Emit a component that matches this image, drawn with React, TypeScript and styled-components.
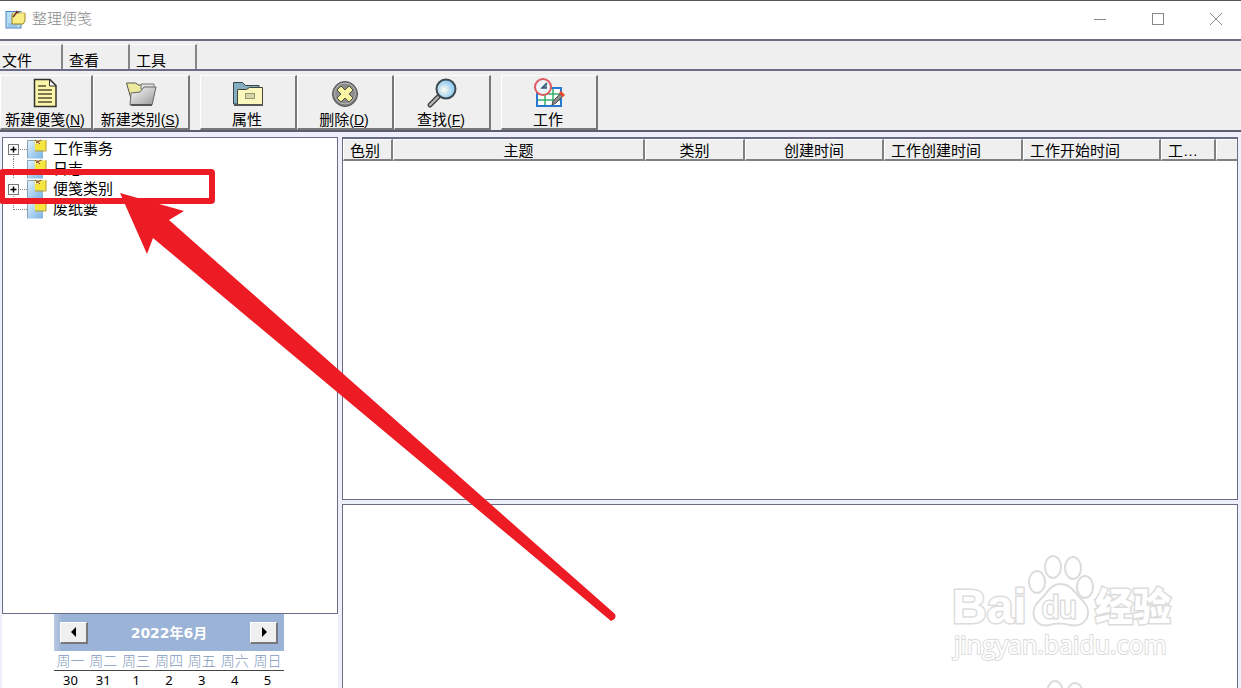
import React from "react";
import styled, { createGlobalStyle } from "styled-components";

const line = "#6c6c88";
const face = "#efefef";
const lavender = "#edf0fb";

const GlobalStyle = createGlobalStyle`
  * { box-sizing: border-box; }
  body {
    margin: 0;
    background: #fff;
    color: #000;
    font-family: "Liberation Sans", "Noto Sans CJK SC", sans-serif;
    font-size: 15px;
    overflow: hidden;
  }
  button { font: inherit; color: inherit; margin: 0; }
`;

const Window = styled.div`
  position: relative;
  display: flex;
  flex-direction: column;
  height: 100vh;
  border-top: 1px solid #58585a;
  overflow: hidden;
`;

const TitleBar = styled.header`
  display: flex;
  align-items: center;
  height: 38px;
  flex: none;
  padding: 0 0 2px 5px;
  gap: 6px;
`;

const Title = styled.h1`
  flex: 1;
  margin: 0;
  font-size: 15px;
  font-weight: 300;
  line-height: 20px;
  color: #8c8c8c;
`;

const WindowControls = styled.div`
  display: flex;
  gap: 8px;
`;

const WindowButton = styled.button`
  display: grid;
  place-items: center;
  width: 50px;
  height: 36px;
  padding: 0;
  border: 0;
  background: none;
`;

const MenuBar = styled.nav`
  display: flex;
  align-items: flex-end;
  flex: none;
  height: 32px;
  border-top: 2px solid ${line};
  border-bottom: 2px solid ${line};
  background: ${face};
`;

const MenuButton = styled.button<{ $width: number }>`
  width: ${(p) => p.$width}px;
  height: 25px;
  padding: 6px 0 0 2px;
  border: 0;
  border-top: 1px solid #fff;
  border-right: 2px solid #85858a;
  background: ${face};
  line-height: 20px;
  text-align: left;
  & + & { padding-left: 6px; }
`;

const Toolbar = styled.div`
  display: flex;
  flex: none;
  gap: 10px;
  padding-top: 4px;
  height: 61px;
  border-bottom: 2px solid #5d5d70;
  background: ${face};
`;

const ToolGroup = styled.div`
  display: flex;
`;

const ToolButton = styled.button<{ $width?: number }>`
  display: flex;
  flex-direction: column;
  align-items: center;
  width: ${(p) => p.$width ?? 97}px;
  height: 55px;
  padding: 2px 2px 0 0;
  border: solid;
  border-width: 1px 2px 2px 1px;
  border-color: #fff #77777c #77777c #fff;
  background: ${face};
  line-height: 20px;
  white-space: nowrap;
  svg { flex: none; margin-left: 2px; }
`;

const Mnemonic = styled.span`
  font-size: 14px;
`;

const Workspace = styled.main`
  display: grid;
  grid-template-columns: 336px minmax(0, 1fr);
  gap: 4px;
  flex: 1;
  min-height: 0;
  padding: 5px 3px 0 2px;
  background: ${lavender};
`;

const Sidebar = styled.aside`
  display: flex;
  flex-direction: column;
  min-height: 0;
  background: #fff;
`;

const TreePane = styled.section`
  flex: 1;
  border: 1px solid ${line};
  background: #fff;
  padding-left: 5px;
`;

const TreeList = styled.ul`
  margin: 0;
  padding: 1px 0 0;
  list-style: none;
`;

const TreeRow = styled.li`
  display: flex;
  align-items: center;
  height: 20px;
  line-height: 20px;
  svg { flex: none; }
`;

const TreeLabel = styled.span`
  margin-left: 6px;
`;

const Calendar = styled.section`
  flex: none;
  width: 230px;
  height: 74px;
  margin-left: 52px;
  overflow: hidden;
`;

const CalendarHeader = styled.div`
  display: flex;
  align-items: center;
  justify-content: space-between;
  height: 37px;
  padding: 0 6px;
  background: linear-gradient(to right, #b9cbe4, #9bb3d6 8px);
`;

const MonthLabel = styled.h2`
  margin: 0;
  color: #fff;
  font-family: "DejaVu Sans", "Noto Sans CJK SC", sans-serif;
  font-size: 14px;
  font-weight: 700;
  line-height: 20px;
`;

const StepButton = styled.button`
  display: grid;
  place-items: center;
  width: 28px;
  height: 22px;
  padding: 0;
  border: solid;
  border-width: 1px 2px 2px 1px;
  border-color: #fff #77777c #77777c #fff;
  background: ${face};
`;

const DayTable = styled.table`
  width: 100%;
  table-layout: fixed;
  border-collapse: collapse;
  text-align: center;
  th, td { padding: 0; }
  th {
    height: 19px;
    padding-top: 1px;
    border-bottom: 1px solid #444;
    color: #7d97ba;
    font-size: 14px;
    font-weight: 300;
    line-height: 18px;
  }
  td {
    height: 18px;
    font-family: "Noto Sans", sans-serif;
    font-size: 13px;
    line-height: 18px;
  }
`;

const Details = styled.div`
  display: grid;
  grid-template-rows: 364fr 184fr;
  gap: 4px;
  min-height: 0;
`;

const ListPane = styled.section`
  min-height: 0;
  border: 1px solid ${line};
  border-top-width: 2px;
  background: #fff;
`;

const PreviewPane = styled.section`
  min-height: 0;
  border: 1px solid ${line};
  border-bottom: 0;
  background: #fff;
`;

const NoteTable = styled.table`
  width: 100%;
  table-layout: fixed;
  border-collapse: separate;
  border-spacing: 0;
`;

const ColumnHead = styled.th<{ $left?: boolean }>`
  height: 22px;
  padding: 2px 6px 0;
  border: solid;
  border-width: 1px 2px 2px 1px;
  border-color: #fff #808084 #808084 #fff;
  background: ${face};
  font-weight: 400;
  line-height: 17px;
  text-align: ${(p) => (p.$left ? "left" : "center")};
  white-space: nowrap;
  overflow: hidden;
  &:last-child { border-right: 0; }
`;

const Annotation = styled.svg`
  position: absolute;
  top: -1px;
  left: 0;
  pointer-events: none;
`;

const Watermark = styled.svg`
  position: absolute;
  right: 61px;
  bottom: 0;
  pointer-events: none;
`;

const NoteStack = () => (
  <svg width="21" height="19" viewBox="0 0 21 19">
    <rect x="1" y="1.500" width="15" height="16.500" fill="#b7dcf6" stroke="#4f86bd" />
    <path d="M3 14h11M3 16h9" stroke="#76add8" />
    <path d="M8 3h12v8l-2 3H7V5z" fill="#f9ec82" stroke="#9b8424" />
    <path d="M8 3h12" stroke="#fff3a0" />
    <path d="M8 7l4-5M11 1l3 2" stroke="#6d3434" strokeWidth="1.500" />
  </svg>
);

const TreeNote = () => (
  <svg width="20" height="20" viewBox="0 0 20 20">
    <defs>
      <linearGradient id="treePaper" x2="1" y2="1">
        <stop offset="0" stopColor="#e4f4ff" />
        <stop offset="1" stopColor="#79b2e2" />
      </linearGradient>
    </defs>
    <path d="M.5 1h15.500v18.500H.5z" fill="url(#treePaper)" />
    <path d="M.5 19.500V1.500H16" fill="none" stroke="#8aa3b5" />
    <path d="M7.500 1.500H19v10H8z" fill="#f7e53f" />
    <path d="M19 1v11H8" fill="none" stroke="#b49c29" />
    <path d="M8 2h5l-1 3H8z" fill="#fff5a3" />
    <path d="M8 1l5 4m1-4-5 3" stroke="#8b3a24" />
  </svg>
);

const TreeBranch = ({ expandable, last }: { expandable?: boolean; last?: boolean }) => (
  <svg width="19" height="20" viewBox="0 0 19 20">
    <path
      d={expandable ? "M5.500 15v5M12 10.500h7" : last ? "M5.500 0v11M6 10.500h13" : "M5.500 0v20M6 10.500h13"}
      stroke="#888"
      strokeDasharray="1 1"
      fill="none"
    />
    {expandable && (
      <>
        <rect x=".5" y="5.500" width="10" height="10" fill="#fff" stroke="#777" />
        <path d="M2.500 10.500h6M5.500 7.500v6" stroke="#000" strokeWidth="1.500" />
      </>
    )}
  </svg>
);

const NewNoteIcon = () => (
  <svg width="32" height="32" viewBox="0 0 32 32">
    <path d="M4.500 1.500H20l6 6v21H4.500z" fill="#fbf5a9" stroke="#33332b" strokeWidth="1.500" />
    <path d="M19.500 2v6H26z" fill="#fff" stroke="#33332b" />
    <path d="M8 8h8M8 12h14M8 16h14M8 20h14M8 24h14" stroke="#554f32" strokeWidth="1.500" />
  </svg>
);

const NewCategoryIcon = () => (
  <svg width="32" height="32" viewBox="0 0 32 32">
    <defs>
      <linearGradient id="steel" x2="1" y2="1">
        <stop offset="0" stopColor="#fafafa" />
        <stop offset="1" stopColor="#999" />
      </linearGradient>
    </defs>
    <path d="M1.500 5h9l3 2h6v8l-12 11z" fill="#ece99c" stroke="#55564a" />
    <path d="M16 6h13v5H16z" fill="#e2e2e2" stroke="#777" />
    <path d="M5 27l1-12 9-1 4-5h12l-4 18z" fill="url(#steel)" stroke="#666" />
    <path d="M6 27h21" stroke="#555" strokeWidth="2" />
  </svg>
);

const PropertiesIcon = () => (
  <svg width="32" height="32" viewBox="0 0 32 32">
    <path d="M1.500 26V4.500h9l3 3H27V26z" fill="#83aec2" stroke="#39434a" />
    <path d="M5.500 11.500h9l3-2h13v17h-25z" fill="#fcf8bd" stroke="#444438" />
    <path d="M2 27h29" stroke="#555" strokeWidth="2" />
    <rect x="13.500" y="15.500" width="9" height="5" fill="#d5d5aa" stroke="#999570" />
  </svg>
);

const DeleteIcon = () => (
  <svg width="32" height="32" viewBox="0 0 32 32">
    <circle cx="16" cy="16" r="12.500" fill="#777" stroke="#555" />
    <circle cx="16" cy="15.500" r="10.500" fill="#8c8c8c" stroke="#bbb" />
    <path
      d="M12 8l4 4 4-4 4 4-4 4 4 4-4 4-4-4-4 4-4-4 4-4-4-4z"
      fill="#faf5a2"
      stroke="#4f4f3d"
      strokeLinejoin="round"
    />
  </svg>
);

const FindIcon = () => (
  <svg width="32" height="32" viewBox="0 0 32 32">
    <defs>
      <radialGradient id="lens" cx=".4" cy=".55">
        <stop offset="0" stopColor="#fffef0" />
        <stop offset="1" stopColor="#91caf1" />
      </radialGradient>
    </defs>
    <path d="M13 18L4 27" stroke="#454545" strokeWidth="5" strokeLinecap="round" />
    <path d="M12 19l-8 8" stroke="#bbb" strokeWidth="2" strokeLinecap="round" />
    <circle cx="20" cy="11" r="9.500" fill="url(#lens)" stroke="#3d4850" strokeWidth="2" />
  </svg>
);

const WorkIcon = () => (
  <svg width="32" height="32" viewBox="0 0 32 32">
    <path d="M4 10h24v18H4z" fill="#fff" stroke="#2679cf" strokeWidth="2" />
    <path d="M5 16h22M5 22h22M12 11v16M20 11v16" stroke="#35b16c" strokeWidth="1.500" />
    <circle cx="10" cy="9" r="8" fill="#eef5fa" stroke="#df595c" strokeWidth="2" />
    <path d="M14 5l-5 5h5" fill="#8395a8" stroke="#355474" strokeWidth="1.500" />
    <path d="M27 16l-7 7-1 4 4-2 7-7z" fill="#8b8b8b" stroke="#4d4d4d" />
    <path d="M27 14l4 4" stroke="#ed472b" strokeWidth="3" />
  </svg>
);

const columns = [
  { label: "色别", width: 50, left: true },
  { label: "主题", width: 252 },
  { label: "类别", width: 100 },
  { label: "创建时间", width: 139 },
  { label: "工作创建时间", width: 139, left: true },
  { label: "工作开始时间", width: 138, left: true },
  { label: "工…", width: 55, left: true },
  { label: "" },
];

const treeItems = [
  { label: "工作事务", expandable: true },
  { label: "日志" },
  { label: "便笺类别", expandable: true },
  { label: "废纸篓", last: true },
];

const weekdays = ["周一", "周二", "周三", "周四", "周五", "周六", "周日"];
const firstWeek = [30, 31, 1, 2, 3, 4, 5];

const Key = ({ letter }: { letter: string }) => (
  <Mnemonic>
    (<u>{letter}</u>)
  </Mnemonic>
);

export default function App() {
  return (
    <>
      <GlobalStyle />
      <Window>
        <TitleBar>
          <NoteStack />
          <Title>整理便笺</Title>
          <WindowControls>
            <WindowButton aria-label="最小化">
              <svg width="14" height="14"><path d="M1 7.500h12" stroke="#888" /></svg>
            </WindowButton>
            <WindowButton aria-label="最大化">
              <svg width="14" height="14"><rect x="1.500" y="1.500" width="11" height="11" fill="none" stroke="#888" /></svg>
            </WindowButton>
            <WindowButton aria-label="关闭">
              <svg width="14" height="14"><path d="M1 1l12 12M13 1L1 13" stroke="#888" /></svg>
            </WindowButton>
          </WindowControls>
        </TitleBar>

        <MenuBar>
          <MenuButton $width={63}>文件</MenuButton>
          <MenuButton $width={67}>查看</MenuButton>
          <MenuButton $width={67}>工具</MenuButton>
        </MenuBar>

        <Toolbar>
          <ToolGroup>
            <ToolButton $width={93}><NewNoteIcon /><span>新建便笺<Key letter="N" /></span></ToolButton>
            <ToolButton><NewCategoryIcon /><span>新建类别<Key letter="S" /></span></ToolButton>
          </ToolGroup>
          <ToolGroup>
            <ToolButton><PropertiesIcon /><span>属性</span></ToolButton>
            <ToolButton><DeleteIcon /><span>删除<Key letter="D" /></span></ToolButton>
            <ToolButton><FindIcon /><span>查找<Key letter="F" /></span></ToolButton>
          </ToolGroup>
          <ToolGroup>
            <ToolButton><WorkIcon /><span>工作</span></ToolButton>
          </ToolGroup>
        </Toolbar>

        <Workspace>
          <Sidebar>
            <TreePane>
              <TreeList>
                {treeItems.map((item) => (
                  <TreeRow key={item.label}>
                    <TreeBranch expandable={item.expandable} last={item.last} />
                    <TreeNote />
                    <TreeLabel>{item.label}</TreeLabel>
                  </TreeRow>
                ))}
              </TreeList>
            </TreePane>
            <Calendar>
              <CalendarHeader>
                <StepButton aria-label="上个月">
                  <svg width="8" height="10"><path d="M6 0v10L1 5z" /></svg>
                </StepButton>
                <MonthLabel>2022年6月</MonthLabel>
                <StepButton aria-label="下个月">
                  <svg width="8" height="10"><path d="M2 0v10l5-5z" /></svg>
                </StepButton>
              </CalendarHeader>
              <DayTable>
                <thead>
                  <tr>{weekdays.map((d) => <th key={d} scope="col">{d}</th>)}</tr>
                </thead>
                <tbody>
                  <tr>{firstWeek.map((d) => <td key={d}>{d}</td>)}</tr>
                </tbody>
              </DayTable>
            </Calendar>
          </Sidebar>

          <Details>
            <ListPane>
              <NoteTable>
                <colgroup>
                  {columns.map((c, i) => <col key={i} width={c.width} />)}
                </colgroup>
                <thead>
                  <tr>
                    {columns.map((c, i) => (
                      <ColumnHead key={i} scope="col" $left={c.left}>{c.label}</ColumnHead>
                    ))}
                  </tr>
                </thead>
              </NoteTable>
            </ListPane>
            <PreviewPane />
          </Details>
        </Workspace>

        <Watermark width="234" height="138" viewBox="946 550 234 138">
          <g fill="#fff" stroke="#dcdcdc" strokeWidth="2">
            <g strokeWidth="3" paintOrder="stroke">
              <text x="952" y="623" fontSize="48" fontWeight="700" fontFamily="Liberation Sans, sans-serif">Bai</text>
              <text x="1095" y="620" fontSize="38" fontWeight="900" fontFamily="Noto Sans CJK SC, sans-serif">经验</text>
              <text x="954" y="654" fontSize="25" strokeWidth="2" fontFamily="Open Sans, sans-serif">jingyan.baidu.com</text>
            </g>
            <ellipse cx="1037" cy="582" rx="8" ry="11" />
            <ellipse cx="1053" cy="567" rx="8" ry="11" />
            <ellipse cx="1073" cy="568" rx="8" ry="11" />
            <ellipse cx="1085" cy="587" rx="8" ry="11" />
            <path d="M1060 584c-10 0-13 10-20 16-13 12-5 28 9 25 7-2 14-2 21 0 16 3 24-12 13-24-8-7-11-17-23-17z" />
            <text x="1042" y="618" fontSize="31" strokeWidth="3" paintOrder="stroke" fontFamily="Liberation Sans, sans-serif">du</text>
            <ellipse cx="1055" cy="693" rx="8" ry="12" />
            <ellipse cx="1075" cy="694" rx="8" ry="11" />
          </g>
        </Watermark>

        <Annotation width="620" height="626" viewBox="0 0 620 626">
          <rect x="2" y="172" width="210" height="29" rx="1" fill="none" stroke="#ed1c24" strokeWidth="6" />
          <path d="M120 193l64 18-15 9 446 394q2 5-4 7L153 238l-6 16z" fill="#ed1c24" />
        </Annotation>
      </Window>
    </>
  );
}
